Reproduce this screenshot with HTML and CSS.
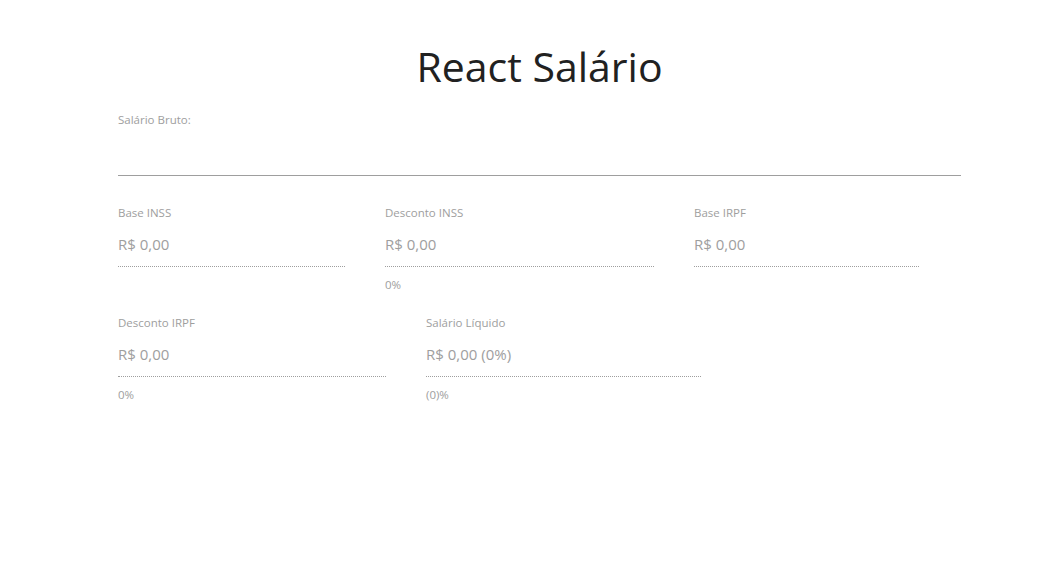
FILE: index.html
```html
<!DOCTYPE html>
<html lang="pt-BR">
<head>
<meta charset="utf-8">
<title>React Salário</title>
<link rel="stylesheet" href="styles.css">
</head>
<body>
<main class="container">
  <h1 class="title">React Salário</h1>
  <div class="field">
    <label class="label">Salário Bruto:</label>
    <div class="input"></div>
  </div>
  <div class="row">
    <div class="cell w1">
      <div class="label">Base INSS</div>
      <div class="value">R$ 0,00</div>
    </div>
    <div class="cell w2">
      <div class="label">Desconto INSS</div>
      <div class="value">R$ 0,00</div>
      <div class="pct">0%</div>
    </div>
    <div class="cell w3">
      <div class="label">Base IRPF</div>
      <div class="value">R$ 0,00</div>
    </div>
  </div>
  <div class="row">
    <div class="cell w4">
      <div class="label">Desconto IRPF</div>
      <div class="value">R$ 0,00</div>
      <div class="pct">0%</div>
    </div>
    <div class="cell w5">
      <div class="label">Salário Líquido</div>
      <div class="value">R$ 0,00 (0%)</div>
      <div class="pct">(0)%</div>
    </div>
  </div>
</main>
</body>
</html>
```

FILE: styles.css
```css
html, body {
  margin: 0;
  padding: 0;
  background: #fff;
}
body {
  font-family: "Open Sans", "Noto Sans", sans-serif;
  color: #212121;
}
.container {
  margin-left: 118px;
  width: 843px;
}
.title {
  margin: 0;
  padding-top: 38px;
  height: 60px;
  font-size: 41px;
  font-weight: 400;
  line-height: 56px;
  text-align: center;
  color: #212121;
}
.field {
  margin-top: 14px;
}
.label {
  display: block;
  font-size: 11.5px;
  line-height: 16px;
  color: #9e9e9e;
}
.input {
  height: 47px;
  border-bottom: 1px solid #9e9e9e;
}
.row {
  display: flex;
  gap: 40px;
  margin-top: 29px;
}
.row + .row {
  margin-top: 22px;
}
.cell {
  display: flex;
  flex-direction: column;
}
.w1 { width: 227px; }
.w2 { width: 269px; }
.w3 { width: 225px; }
.w4 { width: 268px; }
.w5 { width: 275px; }
.value {
  margin-top: 12px;
  font-size: 15px;
  line-height: 22px;
  height: 33px;
  color: #9e9e9e;
  border-bottom: 1px dotted #9e9e9e;
}
.pct {
  margin-top: 10px;
  font-size: 11.5px;
  line-height: 16px;
  color: #9e9e9e;
}
```
